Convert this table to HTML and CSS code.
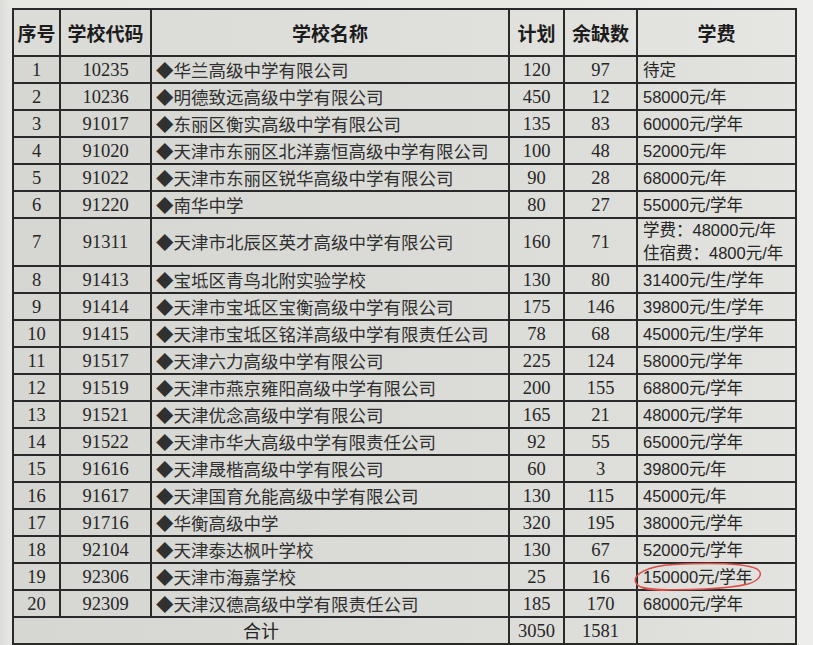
FILE: index.html
```html
<!DOCTYPE html>
<html lang="zh-CN">
<head>
<meta charset="utf-8">
<title>学校名单</title>
<link rel="stylesheet" href="styles.css">
</head>
<body>
<div class="sheet">
<table class="grid">
<colgroup>
<col class="c-no"><col class="c-code"><col class="c-name"><col class="c-plan"><col class="c-left"><col class="c-fee">
</colgroup>
<thead>
<tr class="head">
<th>序号</th><th>学校代码</th><th>学校名称</th><th>计划</th><th>余缺数</th><th>学费</th>
</tr>
</thead>
<tbody>
<tr><td class="num">1</td><td class="num">10235</td><td class="name">◆华兰高级中学有限公司</td><td class="num">120</td><td class="num">97</td><td class="fee">待定</td></tr>
<tr><td class="num">2</td><td class="num">10236</td><td class="name">◆明德致远高级中学有限公司</td><td class="num">450</td><td class="num">12</td><td class="fee">58000元/年</td></tr>
<tr><td class="num">3</td><td class="num">91017</td><td class="name">◆东丽区衡实高级中学有限公司</td><td class="num">135</td><td class="num">83</td><td class="fee">60000元/学年</td></tr>
<tr><td class="num">4</td><td class="num">91020</td><td class="name">◆天津市东丽区北洋嘉恒高级中学有限公司</td><td class="num">100</td><td class="num">48</td><td class="fee">52000元/年</td></tr>
<tr><td class="num">5</td><td class="num">91022</td><td class="name">◆天津市东丽区锐华高级中学有限公司</td><td class="num">90</td><td class="num">28</td><td class="fee">68000元/年</td></tr>
<tr><td class="num">6</td><td class="num">91220</td><td class="name">◆南华中学</td><td class="num">80</td><td class="num">27</td><td class="fee">55000元/学年</td></tr>
<tr class="tall"><td class="num">7</td><td class="num">91311</td><td class="name">◆天津市北辰区英才高级中学有限公司</td><td class="num">160</td><td class="num">71</td><td class="fee two"><div>学费：48000元/年</div><div>住宿费：4800元/年</div></td></tr>
<tr><td class="num">8</td><td class="num">91413</td><td class="name">◆宝坻区青鸟北附实验学校</td><td class="num">130</td><td class="num">80</td><td class="fee">31400元/生/学年</td></tr>
<tr><td class="num">9</td><td class="num">91414</td><td class="name">◆天津市宝坻区宝衡高级中学有限公司</td><td class="num">175</td><td class="num">146</td><td class="fee">39800元/生/学年</td></tr>
<tr><td class="num">10</td><td class="num">91415</td><td class="name">◆天津市宝坻区铭洋高级中学有限责任公司</td><td class="num">78</td><td class="num">68</td><td class="fee">45000元/生/学年</td></tr>
<tr><td class="num">11</td><td class="num">91517</td><td class="name">◆天津六力高级中学有限公司</td><td class="num">225</td><td class="num">124</td><td class="fee">58000元/学年</td></tr>
<tr><td class="num">12</td><td class="num">91519</td><td class="name">◆天津市燕京雍阳高级中学有限公司</td><td class="num">200</td><td class="num">155</td><td class="fee">68800元/学年</td></tr>
<tr><td class="num">13</td><td class="num">91521</td><td class="name">◆天津优念高级中学有限公司</td><td class="num">165</td><td class="num">21</td><td class="fee">48000元/学年</td></tr>
<tr><td class="num">14</td><td class="num">91522</td><td class="name">◆天津市华大高级中学有限责任公司</td><td class="num">92</td><td class="num">55</td><td class="fee">65000元/学年</td></tr>
<tr><td class="num">15</td><td class="num">91616</td><td class="name">◆天津晟楷高级中学有限公司</td><td class="num">60</td><td class="num">3</td><td class="fee">39800元/年</td></tr>
<tr><td class="num">16</td><td class="num">91617</td><td class="name">◆天津国育允能高级中学有限公司</td><td class="num">130</td><td class="num">115</td><td class="fee">45000元/年</td></tr>
<tr><td class="num">17</td><td class="num">91716</td><td class="name">◆华衡高级中学</td><td class="num">320</td><td class="num">195</td><td class="fee">38000元/学年</td></tr>
<tr><td class="num">18</td><td class="num">92104</td><td class="name">◆天津泰达枫叶学校</td><td class="num">130</td><td class="num">67</td><td class="fee">52000元/学年</td></tr>
<tr><td class="num">19</td><td class="num">92306</td><td class="name">◆天津市海嘉学校</td><td class="num">25</td><td class="num">16</td><td class="fee circled">150000元/学年<svg class="ring" viewBox="0 0 132 34" width="132" height="34" aria-hidden="true"><path d="M37 29 C22 29.5 8 29 4 22 C0 14 14 5 42 3.5 C74 2 112 2 125 8 C131 12 129 19 116 23 C96 28 52 29.5 28 28.5 C18 28 12 27 9 26" fill="none" stroke="#dc4e4a" stroke-width="1.5" stroke-linecap="round"/></svg></td></tr>
<tr><td class="num">20</td><td class="num">92309</td><td class="name">◆天津汉德高级中学有限责任公司</td><td class="num">185</td><td class="num">170</td><td class="fee">68000元/学年</td></tr>
<tr class="total"><td class="sum" colspan="3">合计</td><td class="num">3050</td><td class="num">1581</td><td class="fee"></td></tr>
</tbody>
</table>
</div>
</body>
</html>
```

FILE: styles.css
```css
html, body {
  margin: 0;
  padding: 0;
}

body {
  width: 813px;
  height: 645px;
  overflow: hidden;
  background: linear-gradient(90deg, #dcdcda 0px, #e6e6e3 10px, #e8e8e5 60%, #ededeb 100%);
}

.sheet {
  padding: 8px 0 0 12px;
}

.grid {
  border-collapse: collapse;
  table-layout: fixed;
  width: 783px;
  background: linear-gradient(90deg, #d6d6d2 0%, #dadad6 45%, #dededa 80%, #e3e3df 100%);
}

.c-no { width: 47px; }
.c-code { width: 91px; }
.c-name { width: 358px; }
.c-plan { width: 55px; }
.c-left { width: 73px; }
.c-fee { width: 159px; }

.grid th,
.grid td {
  border: 2px solid #2a2a2a;
  padding: 0;
  vertical-align: middle;
  white-space: nowrap;
  overflow: visible;
}

.head {
  height: 47px;
}

.head th {
  font-family: "Noto Sans CJK SC", sans-serif;
  font-weight: 700;
  font-size: 19px;
  color: #1c1c1c;
  text-align: center;
  background: rgba(255, 255, 255, 0.12);
}

.grid tbody tr {
  height: 27px;
}

.grid tbody tr.tall {
  height: 47px;
}

.grid tbody tr.total {
  height: 27px;
}

.num {
  font-family: "Liberation Serif", "Noto Sans CJK SC", serif;
  font-size: 18.5px;
  color: #262626;
  text-align: center;
  line-height: 20px;
}

.name {
  font-family: "Noto Sans CJK SC", sans-serif;
  font-size: 17.5px;
  font-weight: 400;
  color: #303030;
  text-align: left;
  padding-left: 4px !important;
  line-height: 22px;
}

.fee {
  font-family: "Liberation Sans", "Noto Sans CJK SC", sans-serif;
  font-size: 16.5px;
  color: #262626;
  text-align: left;
  padding-left: 5px !important;
  line-height: 20px;
}

.fee.two {
  line-height: 23px;
}

.sum {
  font-family: "Noto Sans CJK SC", sans-serif;
  font-size: 18px;
  color: #262626;
  text-align: center;
  line-height: 19px;
}

.circled {
  position: relative;
}

.ring {
  position: absolute;
  left: -6px;
  top: -3px;
  pointer-events: none;
}
```
